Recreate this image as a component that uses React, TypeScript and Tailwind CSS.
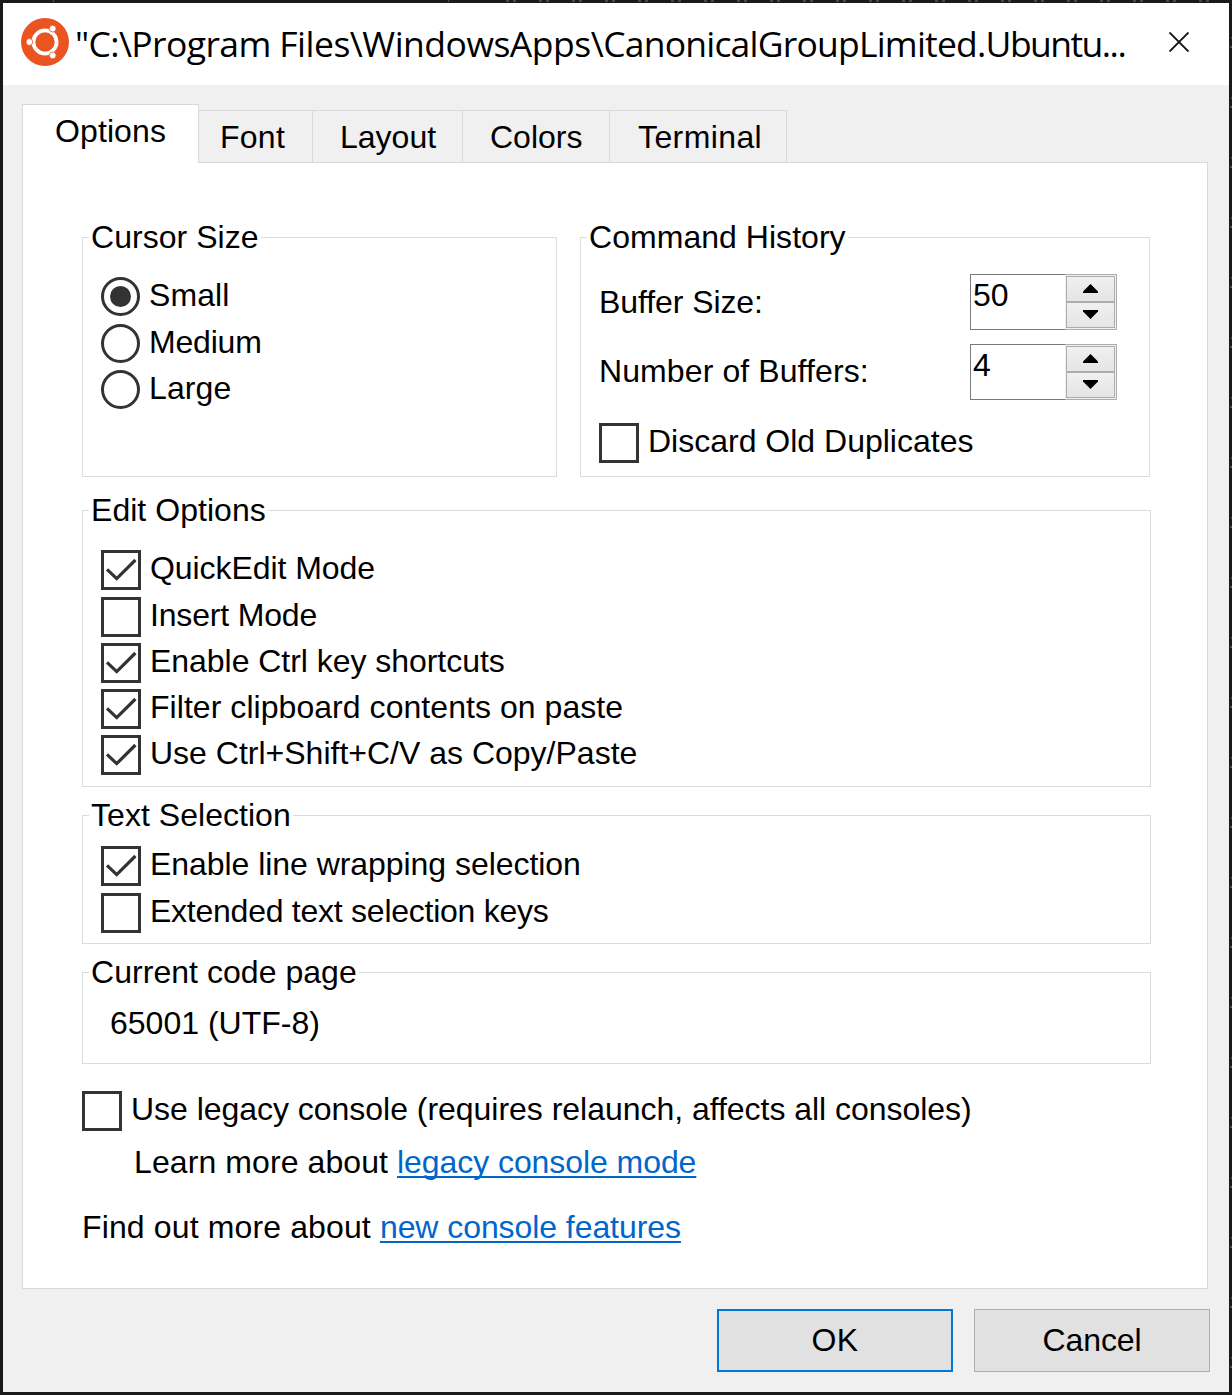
import React from "react";

const topMarks = Array.from({ length: 22 }, (_, i) => i);
const sideMarks = Array.from({ length: 23 }, (_, i) => i);

function UbuntuLogo() {
  return (
    <svg className="h-12 w-12 shrink-0" viewBox="0 0 48 48" fill="none">
      <circle cx="24" cy="24" r="24" fill="#e95420" />
      <g className="blur-[0.6px]">
        <circle cx="24" cy="24" r="11.6" stroke="#fff" strokeWidth="3.8" />
        <g fill="#fff" stroke="#e95420" strokeWidth="0.8">
          <circle cx="8.4" cy="24" r="3.4" />
          <circle cx="31.7" cy="10.6" r="3.4" />
          <circle cx="31.7" cy="37.4" r="3.4" />
        </g>
      </g>
    </svg>
  );
}

type OptionProps = { label: string; checked?: boolean; className?: string };

function Check({ label, checked = false, className = "" }: OptionProps) {
  return (
    <div className={`flex h-10 items-start ${className}`}>
      <span className="h-10 w-10 shrink-0 border-[3px] border-[#333] bg-white">
        {checked && (
          <svg className="h-[34px] w-[34px]" viewBox="0 0 34 34" fill="none" stroke="#333" strokeWidth="3.2">
            <path d="M3 16.4 L12.7 25.6 L31.4 7" />
          </svg>
        )}
      </span>
      <span className="ml-[9px]">{label}</span>
    </div>
  );
}

function Radio({ label, checked = false, className = "" }: OptionProps) {
  return (
    <div className={`flex h-10 items-start ${className}`}>
      <span className="flex h-[39px] w-[39px] shrink-0 items-center justify-center rounded-full border-[3px] border-[#333]">
        {checked && <span className="h-[21px] w-[21px] rounded-full bg-[#333]" />}
      </span>
      <span className="ml-[9px]">{label}</span>
    </div>
  );
}

function Group({ title, className, children }: { title: string; className: string; children: React.ReactNode }) {
  return (
    <section className={`flex flex-col border border-[#dcdcdc] ${className}`}>
      <h2 className="-mt-[19px] ml-[6px] h-9 self-start bg-white px-[2px] tracking-[0.04px]">{title}</h2>
      {children}
    </section>
  );
}

function Spinner({ value }: { value: string }) {
  return (
    <div className="flex h-14 w-[147px]">
      <div className="w-[95px] border-y border-l border-[#7a7a7a] pl-[2px] pt-[2px]">{value}</div>
      <div className="flex w-[52px] flex-col border-y border-r border-[#adadad] bg-[#f0f0f0] py-px pl-px pr-px">
        <div className="flex h-[26px] justify-center border border-[#adadad] bg-linear-to-b from-[#f0f0f0] to-[#e5e5e5] pt-[7px]">
          <svg className="h-[9px] w-[15px]" viewBox="0 0 15 9"><path d="M7.5 0 L15 7.5 V9 H0 V7.5 Z" /></svg>
        </div>
        <div className="flex h-[26px] justify-center border border-[#adadad] bg-linear-to-b from-[#f0f0f0] to-[#e5e5e5] pt-[7px]">
          <svg className="h-[9px] w-[15px]" viewBox="0 0 15 9"><path d="M7.5 9 L15 1.5 V0 H0 V1.5 Z" /></svg>
        </div>
      </div>
    </div>
  );
}

const tabText = "h-[53px] border-t border-r border-b border-[#d9d9d9] pt-[8px]";
const link = "text-[#0066cc] tracking-[-0.07px] underline decoration-2 underline-offset-[3px] [text-decoration-skip-ink:none]";

export default function App() {
  return (
    <div className="flex h-[1395px] w-[1232px] flex-col bg-[#1a1a1a] font-['Liberation_Sans',Arial,sans-serif] text-[32px] leading-9 whitespace-nowrap text-black">
      <div className="flex h-[3px] shrink-0">
        <span className="ml-[53px] h-[2px] w-[2px] bg-[#505050]" />
        <span className="ml-[394px] h-[2px] w-[2px] bg-[#505050]" />
        <div className="ml-[58px] flex">
          {topMarks.map((i) => (
            <span key={i} className="flex w-[33px] gap-[4px]">
              <i className="h-[2px] w-[3px] bg-[#484848]" />
              <i className="h-[2px] w-[3px] bg-[#484848]" />
            </span>
          ))}
        </div>
      </div>
      <div className="flex h-[1389px]">
        <main className="ml-[3px] flex w-[1226px] flex-col bg-[#f0f0f0]">
          <header className="flex h-[82px] shrink-0 bg-white pl-[18px] pt-[15px]">
            <UbuntuLogo />
            <h1 className="ml-[6px] mt-px w-[1094px] font-['Open_Sans','Noto_Sans',sans-serif] text-[35.5px] leading-[48px] tracking-[-0.79px]">
              <span className="tracking-[-0.62px]">"C:\Program </span>
              <span className="tracking-[-0.5px]">Files\WindowsApps\</span>
              <span>CanonicalGroupLimited.</span>
              <span className="tracking-[-1.55px]">Ubuntu...</span>
            </h1>
            <svg className="mt-[14px] h-5 w-5" viewBox="0 0 20 20" stroke="#111" strokeWidth="1.9">
              <path d="M0.5 0.5 L19.5 19.5 M19.5 0.5 L0.5 19.5" />
            </svg>
          </header>
          <nav className="z-10 ml-[19px] mt-[19px] flex h-[59px] shrink-0 items-end">
            <div className="h-[59px] w-[177px] border-x border-t border-[#d9d9d9] bg-white pl-[32px] pt-[8px] tracking-[0.1px]">Options</div>
            <div className={`${tabText} w-[114px] pl-[21px] tracking-[0.25px]`}>Font</div>
            <div className={`${tabText} w-[150px] pl-[27px]`}>Layout</div>
            <div className={`${tabText} w-[147px] pl-[27px]`}>Colors</div>
            <div className={`${tabText} w-[177px] pl-[28px] tracking-[0.4px]`}>Terminal</div>
          </nav>
          <div className="-mt-px ml-[19px] flex h-[1127px] w-[1186px] shrink-0 flex-col border border-[#d9d9d9] bg-white pl-[59px] pt-[74px]">
            <div className="flex gap-[23px]">
              <Group title="Cursor Size" className="h-[240px] w-[475px]">
                <div className="ml-[18px] mt-[22px]">
                  <Radio label="Small" checked className="tracking-[0.1px]" />
                  <Radio label="Medium" className="mt-[7px] tracking-[-0.2px]" />
                  <Radio label="Large" className="mt-[6px] tracking-[0.1px]" />
                </div>
              </Group>
              <Group title="Command History" className="h-[240px] w-[570px]">
                <div className="ml-[18px] mr-[32px] mt-[19px] flex justify-between">
                  <span className="mt-[10px] tracking-[-0.08px]">Buffer Size:</span>
                  <Spinner value="50" />
                </div>
                <div className="ml-[18px] mr-[32px] mt-[14px] flex justify-between">
                  <span className="mt-[9px] tracking-[0.1px]">Number of Buffers:</span>
                  <Spinner value="4" />
                </div>
                <Check label="Discard Old Duplicates" className="ml-[18px] mt-[23px]" />
              </Group>
            </div>
            <Group title="Edit Options" className="mt-[33px] h-[277px] w-[1069px]">
              <div className="ml-[18px] mt-[22px]">
                <Check label="QuickEdit Mode" checked className="tracking-[-0.06px]" />
                <Check label="Insert Mode" className="mt-[7px] tracking-[-0.17px]" />
                <Check label="Enable Ctrl key shortcuts" checked className="mt-[6px] tracking-[-0.04px]" />
                <Check label="Filter clipboard contents on paste" checked className="mt-[6px] tracking-[0.05px]" />
                <Check label="Use Ctrl+Shift+C/V as Copy/Paste" checked className="mt-[6px]" />
              </div>
            </Group>
            <Group title="Text Selection" className="mt-[28px] h-[129px] w-[1069px]">
              <div className="ml-[18px] mt-[13px]">
                <Check label="Enable line wrapping selection" checked className="tracking-[-0.05px]" />
                <Check label="Extended text selection keys" className="mt-[7px] tracking-[-0.25px]" />
              </div>
            </Group>
            <Group title="Current code page" className="mt-[28px] h-[92px] w-[1069px]">
              <p className="ml-[27px] mt-[15px]">65001 (UTF-8)</p>
            </Group>
            <Check label="Use legacy console (requires relaunch, affects all consoles)" className="mt-[27px] tracking-[-0.03px]" />
            <p className="ml-[52px] mt-[13px] tracking-[0.09px]">
              Learn more about{" "}
              <a className={link}>legacy console mode</a>
            </p>
            <p className="mt-[29px] tracking-[0.13px]">
              Find out more about{" "}
              <a className={link}>new console features</a>
            </p>
          </div>
          <footer className="mt-[20px] flex gap-[21px] pl-[714px]">
            <button className="h-[63px] w-[236px] border-2 border-[#0078d7] bg-[#e1e1e1] pb-[2px] tracking-[0.3px]">OK</button>
            <button className="h-[63px] w-[236px] border border-[#adadad] bg-[#e1e1e1] pb-[2px] tracking-[-0.1px]">Cancel</button>
          </footer>
        </main>
        <div className="flex w-[3px] flex-col items-end overflow-hidden pt-[34px]">
          {sideMarks.map((i) => (
            <span key={i} className="flex h-[60px] shrink-0 flex-col items-end gap-[7px]">
              <i className="h-[2px] w-px bg-[#3c444c]" />
              <i className="h-[2px] w-[2px] bg-[#4a4f55]" />
            </span>
          ))}
        </div>
      </div>
    </div>
  );
}
